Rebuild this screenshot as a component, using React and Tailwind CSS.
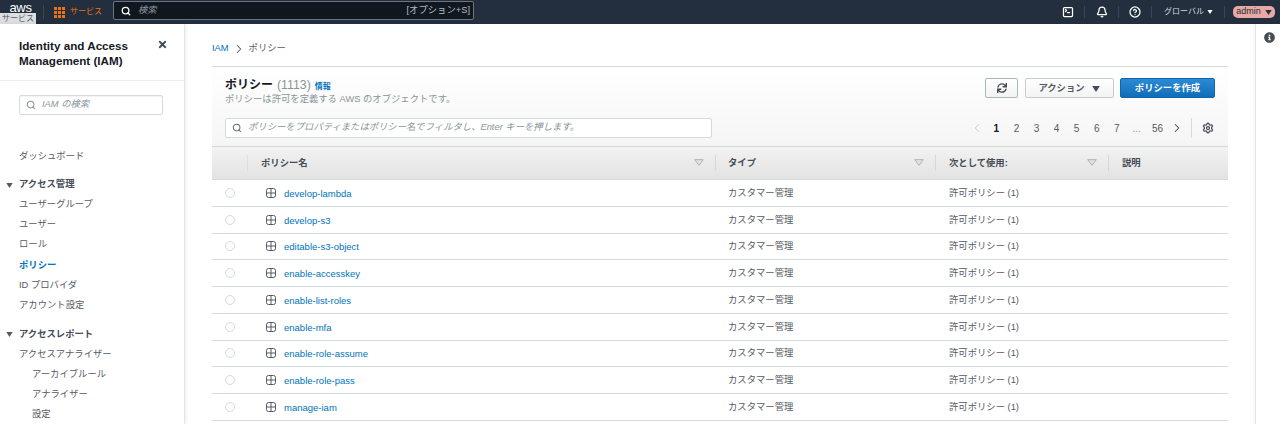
import React from 'react';
import { Search, ChevronLeft, ChevronRight, Settings, CircleHelp, Bell, SquareTerminal } from 'lucide-react';
import { FaSync, FaTimes, FaInfoCircle } from 'react-icons/fa';

const font = { fontFamily: '"Liberation Sans", "Noto Sans CJK JP", sans-serif' };

const policies = [
    'develop-lambda',
    'develop-s3',
    'editable-s3-object',
    'enable-accesskey',
    'enable-list-roles',
    'enable-mfa',
    'enable-role-assume',
    'enable-role-pass',
    'manage-iam',
];

function Tri({ className }) {
    return (
        <svg width="9" height="7" viewBox="0 0 9 7" className={className}>
            <path d="M0 0h9L4.5 7z" fill="currentColor" />
        </svg>
    );
}

function SortArrow() {
    return (
        <svg width="10" height="7" viewBox="0 0 10 7" className="mb-[1px]">
            <path d="M0.7 0.7h8.6L5 6.3z" fill="#e2e2e2" stroke="#b0b0b0" strokeWidth="1" />
        </svg>
    );
}

function ExpandIcon() {
    return (
        <svg width="10" height="10" viewBox="0 0 10 10">
            <rect x="0.5" y="0.5" width="9" height="9" rx="2" fill="none" stroke="#545b64" strokeWidth="1" />
            <path d="M5 1v8M1 5h8" stroke="#545b64" strokeWidth="1" />
        </svg>
    );
}

function AppsIcon() {
    const cells = [0, 1, 2, 3, 4, 5, 6, 7, 8];
    return (
        <div className="grid grid-cols-3 gap-[1px] w-[11px] h-[11px]">
            {cells.map((c) => (
                <div key={c} className="bg-[#ec7211]" />
            ))}
        </div>
    );
}

function TopBar() {
    return (
        <div className="h-6 shrink-0 bg-[#232f3e] flex items-center text-white relative">
            <div className="w-[40px] shrink-0 flex justify-center -mt-[9px] pl-[1px] text-[13px] leading-none tracking-tight">aws</div>
            <div className="w-[1px] h-[14px] bg-[#3a4656] ml-[3px]" />
            <div className="ml-[10px]"><AppsIcon /></div>
            <span className="ml-[5px] text-[8px] text-[#ec7211]">サービス</span>
            <div className="ml-[11px] w-[361px] h-[19px] mt-[-3px] bg-[#11171f] border border-[#6b7480] rounded-[2px] flex items-center pl-[7px] pr-[3px]">
                <Search size={10} strokeWidth={3} className="text-white" />
                <span className="ml-[7px] text-[9.33px] italic text-[#8d949c]">検索</span>
                <span className="ml-auto text-[9.33px] text-[#b5bac0]">[オプション+S]</span>
            </div>
            <div className="ml-auto flex items-center h-full">
                <SquareTerminal size={12} strokeWidth={2.5} className="text-white" />
                <div className="w-[1px] h-[12px] bg-[#3a4656] ml-[10px] mr-[11px]" />
                <Bell size={12} strokeWidth={2.5} className="text-white" />
                <div className="w-[1px] h-[12px] bg-[#3a4656] ml-[10px] mr-[10px]" />
                <CircleHelp size={12} strokeWidth={2.5} className="text-white" />
                <div className="w-[1px] h-[12px] bg-[#3a4656] ml-[10px] mr-[12px]" />
                <span className="text-[8px] text-[#d5dbdb]">グローバル</span>
                <Tri className="ml-[3px] text-white w-[6px] h-[4px]" />
                <div className="w-[1px] h-[12px] bg-[#3a4656] ml-[11px] mr-[8px]" />
                <div className="w-[42px] h-[12px] mr-[5px] rounded-[5px] bg-[#e8a9a4] flex items-center justify-center text-[9px] text-[#232f3e]">
                    admin
                    <Tri className="ml-[4px] text-[#232f3e] w-[7px] h-[5px]" />
                </div>
            </div>
            <div className="absolute left-0 top-[13px] w-[36px] h-[12px] bg-[#dcdedf] shadow-[0_1px_2px_rgba(0,0,0,0.15)] text-[#545b64] text-[8px] leading-[12px] text-center">サービス</div>
        </div>
    );
}

function NavItem({ children, indent, active }) {
    return (
        <div className={`h-[20.1px] flex items-center text-[9.33px] ${indent ? 'pl-[32px]' : 'pl-[19px]'} ${active ? 'text-[#0073bb] font-bold' : 'text-[#545b64]'}`}>
            {children}
        </div>
    );
}

function NavHead({ children }) {
    return (
        <div className="h-[20.1px] flex items-center text-[9.33px] font-bold text-[#444c55] pl-[6px]">
            <Tri className="w-[7px] h-[5px] text-[#545b64] mr-[6px]" />
            {children}
        </div>
    );
}

function Sidebar() {
    return (
        <div className="w-[185px] shrink-0 bg-white border-r border-[#e4e6e6] shadow-[1px_0_3px_rgba(0,0,0,0.08)] z-10 flex flex-col">
            <div className="h-[57px] shrink-0 border-b border-[#eaeded] pl-[19px] pr-[16px] pt-[14px] flex justify-between">
                <div className="text-[11.67px] leading-[15px] font-bold text-[#16191f]">
                    Identity and Access<br />Management (IAM)
                </div>
                <FaTimes size={11} className="text-[#444c55] mt-[1px]" />
            </div>
            <div className="mt-[14px] ml-[19px] w-[144px] h-[20px] shrink-0 border border-[#d5dbdb] rounded-[2px] shadow-[inset_0_1px_1px_rgba(0,0,0,0.05)] flex items-center pl-[6px]">
                <Search size={10} strokeWidth={2.5} className="text-[#879596]" />
                <span className="ml-[6px] text-[9.33px] italic text-[#879596]">IAM の検索</span>
            </div>
            <div className="mt-[32px]">
                <NavItem>ダッシュボード</NavItem>
            </div>
            <div className="mt-[8px]">
                <NavHead>アクセス管理</NavHead>
                <NavItem>ユーザーグループ</NavItem>
                <NavItem>ユーザー</NavItem>
                <NavItem>ロール</NavItem>
                <NavItem active>ポリシー</NavItem>
                <NavItem>ID プロバイダ</NavItem>
                <NavItem>アカウント設定</NavItem>
            </div>
            <div className="mt-[9px]">
                <NavHead>アクセスレポート</NavHead>
                <NavItem>アクセスアナライザー</NavItem>
                <NavItem indent>アーカイブルール</NavItem>
                <NavItem indent>アナライザー</NavItem>
                <NavItem indent>設定</NavItem>
            </div>
        </div>
    );
}

function PolicyHeader() {
    return (
        <div className="h-[80px] bg-gradient-to-b from-white to-[#f5f5f5] px-[13px] border-t border-[#d5dbdb]">
            <div className="flex justify-between">
                <div className="pt-[11px]">
                    <div className="flex items-baseline leading-[14px]">
                        <span className="text-[12px] font-bold text-[#16191f]">ポリシー</span>
                        <span className="ml-[4px] text-[12.3px] text-[#879596]">(1113)</span>
                        <span className="ml-[4px] text-[8px] font-bold text-[#0073bb]">情報</span>
                    </div>
                    <div className="text-[9.33px] leading-[12px] -mt-[1px] text-[#879596]">ポリシーは許可を定義する AWS のオブジェクトです。</div>
                </div>
                <div className="flex pt-[11px] gap-[6px]">
                    <div className="w-[33px] h-[20px] mr-[1px] border border-[#aab7b8] rounded-[2px] bg-gradient-to-b from-white to-[#f2f3f3] flex items-center justify-center">
                        <FaSync size={10} className="text-[#444c55]" />
                    </div>
                    <div className="w-[89px] h-[20px] pt-[1px] border border-[#c6cccc] rounded-[2px] bg-gradient-to-b from-white to-[#f2f3f3] flex items-center justify-center text-[9.33px] font-bold text-[#545b64]">
                        アクション
                        <Tri className="ml-[6px] w-[10px] h-[6px] text-[#444c55]" />
                    </div>
                    <div className="w-[95px] h-[20px] pt-[1px] rounded-[2px] bg-gradient-to-b from-[#2b8ad6] to-[#0f6db8] border border-[#1268ad] flex items-center justify-center text-[9.33px] font-bold text-white">
                        ポリシーを作成
                    </div>
                </div>
            </div>
            <div className="flex items-center mt-[13px]">
                <div className="w-[487px] h-[20px] bg-white border border-[#d5dbdb] rounded-[2px] flex items-center pl-[6px]">
                    <Search size={10} strokeWidth={2.5} className="text-[#687078]" />
                    <span className="ml-[6px] text-[9.33px] italic text-[#879596]">ポリシーをプロパティまたはポリシー名でフィルタし、Enter キーを押します。</span>
                </div>
                <div className="ml-auto flex items-center text-[10px] text-[#545b64] h-[20px]">
                    <ChevronLeft size={14} strokeWidth={1.5} className="text-[#c5c9cc]" />
                    <span className="ml-[10px] font-bold text-[#16191f]">1</span>
                    <span className="ml-[14.5px]">2</span>
                    <span className="ml-[14.5px]">3</span>
                    <span className="ml-[14.5px]">4</span>
                    <span className="ml-[14.5px]">5</span>
                    <span className="ml-[14.5px]">6</span>
                    <span className="ml-[14.5px]">7</span>
                    <span className="ml-[13px] text-[#879596]">...</span>
                    <span className="ml-[11px]">56</span>
                    <ChevronRight size={14} strokeWidth={1.8} className="ml-[7px] text-[#444c55]" />
                    <div className="w-[1px] h-[20px] bg-[#d5dbdb] ml-[7px] mr-[10px]" />
                    <Settings size={12} strokeWidth={2.5} className="text-[#444c55] mr-[1px]" />
                </div>
            </div>
        </div>
    );
}

const gridCols = 'grid grid-cols-[36px_468px_220px_173px_119px]';

function TableHead() {
    return (
        <div className={`${gridCols} h-[34px] bg-gradient-to-b from-[#f2f2f2] to-[#e3e3e3] border-t border-b border-[#d5dbdb] text-[9.33px] font-bold text-[#444c55]`}>
            <div className="flex items-center justify-end"><div className="w-[1px] h-[16px] bg-[#dcdfe0]" /></div>
            <div className="flex items-center pl-[13px] pr-[11px] border-r border-[#d5d8d9] my-[8px] justify-between"><span className="pt-[2px]">ポリシー名</span><SortArrow /></div>
            <div className="flex items-center pl-[12px] pr-[11px] border-r border-[#d5d8d9] my-[8px] justify-between"><span className="pt-[2px]">タイプ</span><SortArrow /></div>
            <div className="flex items-center pl-[13px] pr-[11px] border-r border-[#d5d8d9] my-[8px] justify-between"><span className="pt-[2px]">次として使用:</span><SortArrow /></div>
            <div className="flex items-center pl-[13px] my-[8px]"><span className="pt-[2px]">説明</span></div>
        </div>
    );
}

function PolicyRow({ name }) {
    return (
        <div className={`${gridCols} h-[26.75px] border-b border-[#d5dbdb] items-center text-[9.33px] text-[#545b64]`}>
            <div className="pl-[13px]">
                <div className="w-[10px] h-[10px] rounded-full border border-[#d5dbdb] bg-white" />
            </div>
            <div className="flex items-center pl-[18px]">
                <ExpandIcon />
                <span className="ml-[8px] pt-[2px] text-[9.5px] text-[#0073bb]">{name}</span>
            </div>
            <div className="pl-[12px] pt-[2px]">カスタマー管理</div>
            <div className="pl-[13px] pt-[2px]">許可ポリシー (1)</div>
            <div />
        </div>
    );
}

export default function App() {
    return (
        <div className="w-[1280px] h-[424px] overflow-hidden flex flex-col bg-white" style={font}>
            <TopBar />
            <div className="flex flex-1 min-h-0">
                <Sidebar />
                <div className="flex-1 min-w-0 pl-[27px] pr-[27px]">
                    <div className="h-[42px] flex items-center text-[9.33px] text-[#545b64] pt-[7px]">
                        <span className="text-[#0073bb]">IAM</span>
                        <ChevronRight size={14} strokeWidth={1.8} className="mx-[3px] text-[#545b64]" />
                        <span>ポリシー</span>
                    </div>
                    <PolicyHeader />
                    <TableHead />
                    {policies.map((p) => (
                        <PolicyRow key={p} name={p} />
                    ))}
                </div>
                <div className="w-[25px] shrink-0 border-l border-[#e4e6e6] shadow-[-1px_0_2px_rgba(0,0,0,0.05)] pt-[8px] pl-[8px]">
                    <FaInfoCircle size={11} className="text-[#444c55]" />
                </div>
            </div>
        </div>
    );
}
